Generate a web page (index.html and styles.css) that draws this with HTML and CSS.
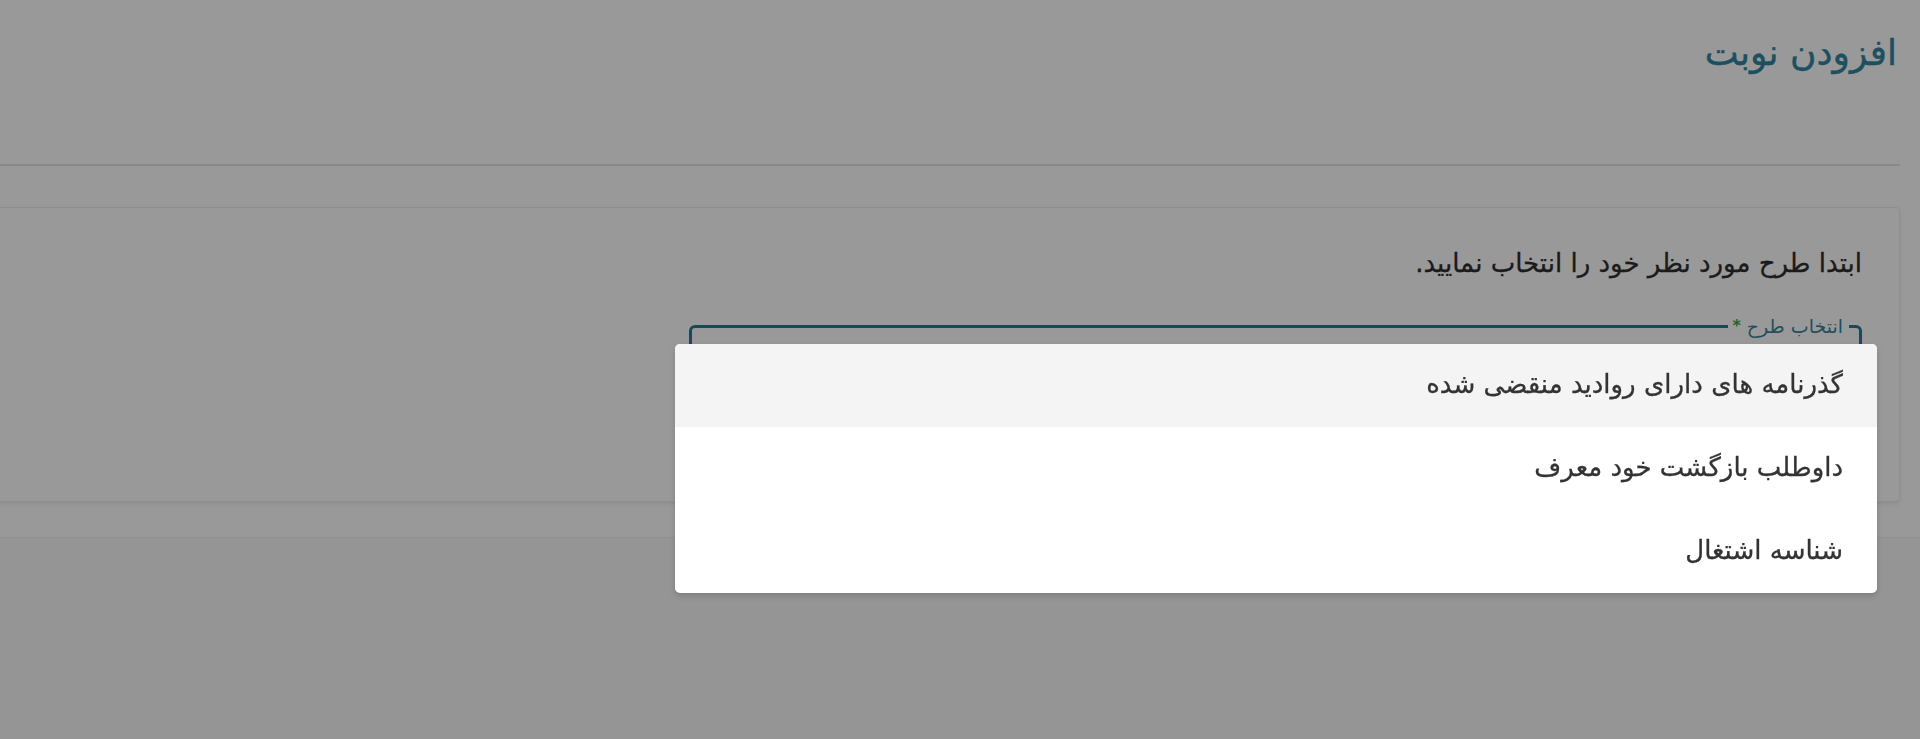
FILE: index.html
```html
<!DOCTYPE html>
<html lang="fa" dir="rtl">
<head>
<meta charset="utf-8">
<title>افزودن نوبت</title>
<link rel="stylesheet" href="styles.css">
</head>
<body>
<div class="page">
  <main class="panel">
    <header class="page-header">
      <h1 class="page-title">افزودن نوبت</h1>
    </header>
    <section class="card">
      <p class="card-text">ابتدا طرح مورد نظر خود را انتخاب نمایید.</p>
      <fieldset class="field">
        <legend class="field-label">انتخاب طرح <span class="req">*</span></legend>
        <div class="field-value"></div>
      </fieldset>
    </section>
  </main>
</div>
<div class="backdrop"></div>
<ul class="menu">
  <li class="menu-item is-active">گذرنامه های دارای روادید منقضی شده</li>
  <li class="menu-item">داوطلب بازگشت خود معرف</li>
  <li class="menu-item">شناسه اشتغال</li>
</ul>
</body>
</html>
```

FILE: styles.css
```css
html, body {
  margin: 0;
  padding: 0;
  height: 100%;
}
body {
  font-family: "DejaVu Sans", sans-serif;
  background: #f8f8f8;
  color: #333;
  overflow: hidden;
}
.page {
  min-height: 100%;
}
.panel {
  background: #ffffff;
  padding: 0 20px 35px 0;
  border-bottom: 1px solid #eeeeee;
}
.page-header {
  height: 166px;
  border-bottom: 2px solid #e4e4e4;
  box-sizing: border-box;
  padding-top: 31px;
  padding-right: 3px;
}
.page-title {
  margin: 0;
  font-size: 36px;
  font-weight: normal;
  line-height: 44px;
  color: #2f86a0;
  -webkit-text-stroke: 0.4px #2f86a0;
}
.card {
  margin-top: 41px;
  margin-left: -10px;
  height: 295px;
  box-sizing: border-box;
  background: #ffffff;
  border: 1px solid #eeeeee;
  border-radius: 4px;
  box-shadow: 0 2px 4px rgba(0, 0, 0, 0.08);
  padding: 40px 37px 0 0;
}
.card-text {
  margin: 0;
  font-size: 26px;
  line-height: 30px;
  color: #2e2e2e;
  -webkit-text-stroke: 0.3px #2e2e2e;
}
.field {
  margin: 34px 0 0 0;
  width: 1173px;
  height: 70px;
  box-sizing: border-box;
  border: 3px solid #2b7a92;
  border-radius: 6px;
  padding: 0 10px;
}
.field-label {
  padding: 0 6px 0 4px;
  font-size: 19px;
  color: #3a8499;
  line-height: 28px;
}
.req {
  color: #43a047;
  font-size: 16px;
  font-weight: bold;
  vertical-align: top;
}
.backdrop {
  position: fixed;
  inset: 0;
  background: rgba(0, 0, 0, 0.4);
}
.menu {
  position: absolute;
  top: 344px;
  left: 675px;
  width: 1202px;
  margin: 0;
  padding: 0;
  list-style: none;
  background: #ffffff;
  border-radius: 5px;
  box-shadow: 0 3px 6px rgba(0, 0, 0, 0.15);
  overflow: hidden;
}
.menu-item {
  height: 83px;
  display: flex;
  align-items: center;
  padding-right: 34px;
  padding-bottom: 4px;
  box-sizing: border-box;
  font-size: 26px;
  color: #333;
  -webkit-text-stroke: 0.3px #333;
}
.menu-item.is-active {
  background: #f4f4f4;
}
```
